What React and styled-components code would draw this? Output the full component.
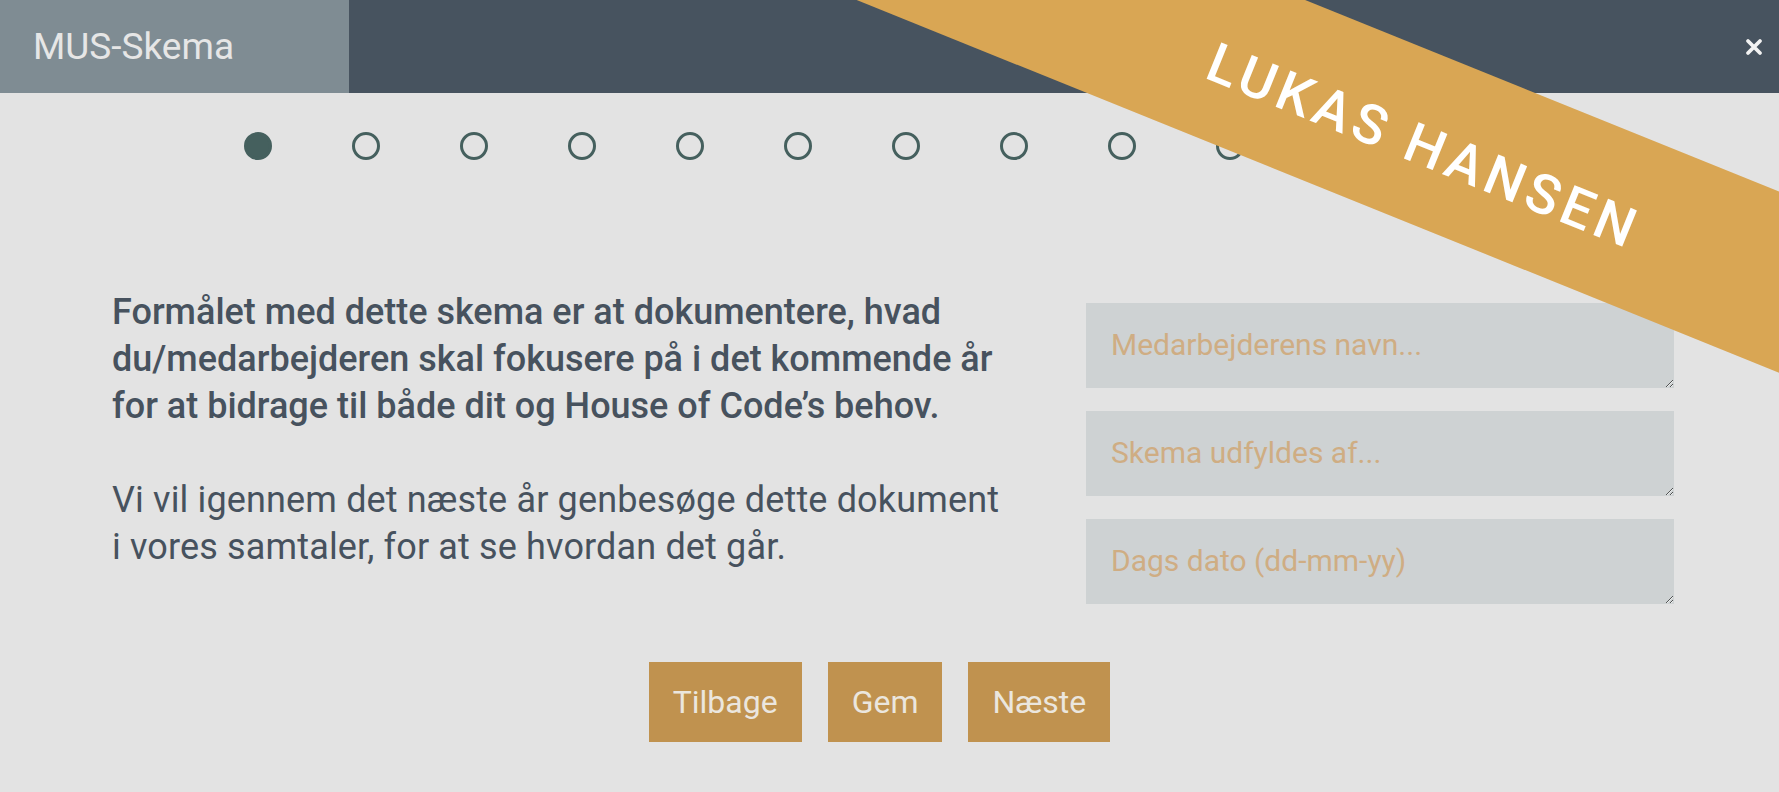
import React from "react";
import styled, { createGlobalStyle } from "styled-components";

const GlobalStyle = createGlobalStyle`
  html, body {
    margin: 0;
    padding: 0;
    background: #e3e3e3;
    font-family: Roboto, "Liberation Sans", sans-serif;
  }
`;

const Page = styled.div`
  position: relative;
  width: 100%;
  height: 792px;
  overflow: hidden;
  background: #e3e3e3;
`;

const Header = styled.header`
  display: flex;
  align-items: center;
  height: 93px;
  background: #47535f;
`;

const Tab = styled.div`
  display: flex;
  align-items: center;
  width: 349px;
  height: 100%;
  box-sizing: border-box;
  padding-left: 33px;
  background: #7f8c93;
  color: #e6e6e6;
  font-size: 37px;
`;

const Spacer = styled.div`
  flex: 1;
`;

const CloseButton = styled.button`
  display: flex;
  align-items: center;
  justify-content: center;
  width: 24px;
  height: 24px;
  margin-right: 13px;
  padding: 0;
  border: none;
  background: none;
  cursor: pointer;
`;

const Steps = styled.div`
  display: flex;
  gap: 80px;
  margin-top: 39px;
  padding-left: 244px;
`;

const Dot = styled.span`
  width: 28px;
  height: 28px;
  box-sizing: border-box;
  border-radius: 50%;
  border: 3px solid #45605e;
  background: ${(p) => (p.$active ? "#45605e" : "transparent")};
`;

const Content = styled.div`
  display: flex;
  justify-content: space-between;
  align-items: flex-start;
  margin-top: 129px;
  padding: 0 105px 0 112px;
`;

const Intro = styled.div`
  color: #47525e;
  font-size: 36px;
  line-height: 47px;
`;

const Paragraph = styled.p`
  margin: 0 0 47px;
  font-weight: ${(p) => (p.$strong ? 500 : 400)};
  letter-spacing: ${(p) => (p.$strong ? 0 : 0.15)}px;
  white-space: nowrap;
`;

const Form = styled.div`
  display: flex;
  flex-direction: column;
  gap: 23px;
  width: 588px;
  margin-top: 14px;
`;

const Field = styled.textarea`
  height: 85px;
  box-sizing: border-box;
  padding: 24px 25px;
  border: none;
  background: #ced2d3;
  color: #47525e;
  font-family: Roboto, "Liberation Sans", sans-serif;
  font-size: 30px;
  line-height: 36px;
  outline: none;

  &::placeholder {
    color: #cfad83;
  }
`;

const Actions = styled.div`
  display: flex;
  justify-content: center;
  gap: 26px;
  margin-top: 44px;
  padding-right: 20px;
`;

const Button = styled.button`
  height: 80px;
  padding: 0 24px;
  border: none;
  background: #c0924f;
  color: #ebe6de;
  font-family: Roboto, "Liberation Sans", sans-serif;
  font-size: 32px;
  cursor: pointer;
`;

const Ribbon = styled.div`
  position: absolute;
  left: 720px;
  top: 53px;
  width: 1400px;
  height: 168px;
  transform: rotate(22deg);
  display: flex;
  align-items: center;
  justify-content: center;
  padding-top: 14px;
  padding-left: 14px;
  box-sizing: border-box;
  background: #d9a654;
  color: #ffffff;
  font-size: 55px;
  font-weight: 500;
  letter-spacing: 5px;
`;

export default function App() {
  const steps = Array.from({ length: 12 }, (_, i) => i);

  return (
    <Page>
      <GlobalStyle />
      <Header>
        <Tab>MUS-Skema</Tab>
        <Spacer />
        <CloseButton aria-label="Luk">
          <svg width="18" height="18" viewBox="0 0 18 18">
            <path d="M3 3 L15 15 M15 3 L3 15" stroke="#f2f2f2" strokeWidth="3.8" strokeLinecap="round" />
          </svg>
        </CloseButton>
      </Header>

      <Steps>
        {steps.map((i) => (
          <Dot key={i} $active={i === 0} />
        ))}
      </Steps>

      <Content>
        <Intro>
          <Paragraph $strong>
            Formålet med dette skema er at dokumentere, hvad
            <br />
            du/medarbejderen skal fokusere på i det kommende år
            <br />
            for at bidrage til både dit og House of Code’s behov.
          </Paragraph>
          <Paragraph>
            Vi vil igennem det næste år genbesøge dette dokument
            <br />
            i vores samtaler, for at se hvordan det går.
          </Paragraph>
        </Intro>
        <Form>
          <Field placeholder="Medarbejderens navn..." />
          <Field placeholder="Skema udfyldes af..." />
          <Field placeholder="Dags dato (dd-mm-yy)" />
        </Form>
      </Content>

      <Actions>
        <Button>Tilbage</Button>
        <Button>Gem</Button>
        <Button>Næste</Button>
      </Actions>

      <Ribbon>LUKAS HANSEN</Ribbon>
    </Page>
  );
}
